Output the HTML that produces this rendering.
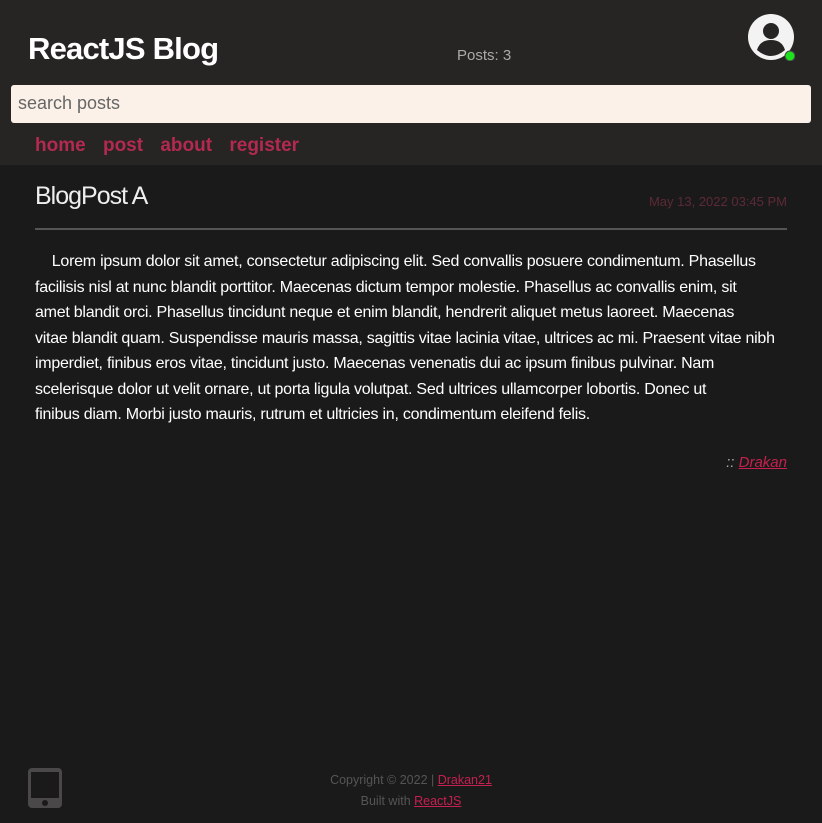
<!DOCTYPE html>
<html><head><style>
*{margin:0;padding:0;box-sizing:border-box}
body{width:822px;height:823px;background:#1b1a1a;font-family:"Liberation Sans",sans-serif;position:relative;overflow:hidden}
header{position:absolute;left:0;top:0;width:822px;height:165px;background:#262524}
h1{position:absolute;left:28px;top:31px;font-size:31px;color:#fff;font-weight:bold;letter-spacing:-0.8px}
.cnt{position:absolute;left:457px;top:47px;font-size:15px;color:#aaa}
.av{position:absolute;left:748px;top:14px;width:47px;height:47px}
.search{position:absolute;left:11px;top:85px;width:800px;height:38px;background:#fbf1e8;border-radius:3px;font-size:18px;color:#666;padding:8px 7px}
nav{position:absolute;left:35px;top:135px;font-size:19px;font-weight:bold;color:#b3294f;letter-spacing:0}
nav span{margin-right:12px}
.title{position:absolute;left:35px;top:182px;font-size:25px;color:#eee;letter-spacing:-1px;font-weight:300}
.date{position:absolute;right:35px;top:194px;font-size:13px;color:#5c2a36}
hr{position:absolute;left:35px;top:228px;width:752px;border:0;border-top:2px solid #555}
.txt{position:absolute;left:35px;top:249px;font-size:16px;line-height:25.5px;color:#fff;white-space:nowrap;letter-spacing:-0.25px}
.auth{position:absolute;right:35px;top:454px;font-size:15px;color:#aaa;font-style:italic}
.auth a,.ft a{color:#c5204f;text-decoration:underline}
.ft{position:absolute;left:0;width:822px;top:770px;text-align:center;font-size:12.5px;line-height:21px;color:#555}
.ph{position:absolute;left:28px;top:768px;width:34px;height:40px;border-radius:4px;background:#4a4848}
.ph:before{content:"";position:absolute;left:3px;top:4px;width:28px;height:26px;background:#1b1a1a}
.ph:after{content:"";position:absolute;left:14px;top:32px;width:6px;height:6px;border-radius:50%;background:#1b1a1a}
</style></head><body>
<header>
<h1>ReactJS Blog</h1>
<div class="cnt">Posts: 3</div>
<svg class="av" viewBox="0 0 47 47"><circle cx="23" cy="23" r="23" fill="#f3f3f3"/><circle cx="23" cy="17" r="8" fill="#262524"/><path d="M9 36 Q12 26 23 26 Q34 26 37 36 Q30 42 23 42 Q16 42 9 36Z" fill="#262524"/><circle cx="42" cy="42" r="5" fill="#1ee01e" stroke="#444" stroke-width="1"/></svg>
<div class="search">search posts</div>
<nav><span>home</span> <span>post</span> <span>about</span> <span>register</span></nav>
</header>
<div class="title">BlogPost A</div>
<div class="date">May 13, 2022 03:45 PM</div>
<hr>
<div class="txt">&nbsp;&nbsp;&nbsp;&nbsp;Lorem ipsum dolor sit amet, consectetur adipiscing elit. Sed convallis posuere condimentum. Phasellus<br>facilisis nisl at nunc blandit porttitor. Maecenas dictum tempor molestie. Phasellus ac convallis enim, sit<br>amet blandit orci. Phasellus tincidunt neque et enim blandit, hendrerit aliquet metus laoreet. Maecenas<br>vitae blandit quam. Suspendisse mauris massa, sagittis vitae lacinia vitae, ultrices ac mi. Praesent vitae nibh<br>imperdiet, finibus eros vitae, tincidunt justo. Maecenas venenatis dui ac ipsum finibus pulvinar. Nam<br>scelerisque dolor ut velit ornare, ut porta ligula volutpat. Sed ultrices ullamcorper lobortis. Donec ut<br>finibus diam. Morbi justo mauris, rutrum et ultricies in, condimentum eleifend felis.</div>
<div class="auth">:: <a>Drakan</a></div>
<div class="ph"></div>
<div class="ft">Copyright © 2022 | <a>Drakan21</a><br>Built with <a>ReactJS</a></div>
</body></html>
